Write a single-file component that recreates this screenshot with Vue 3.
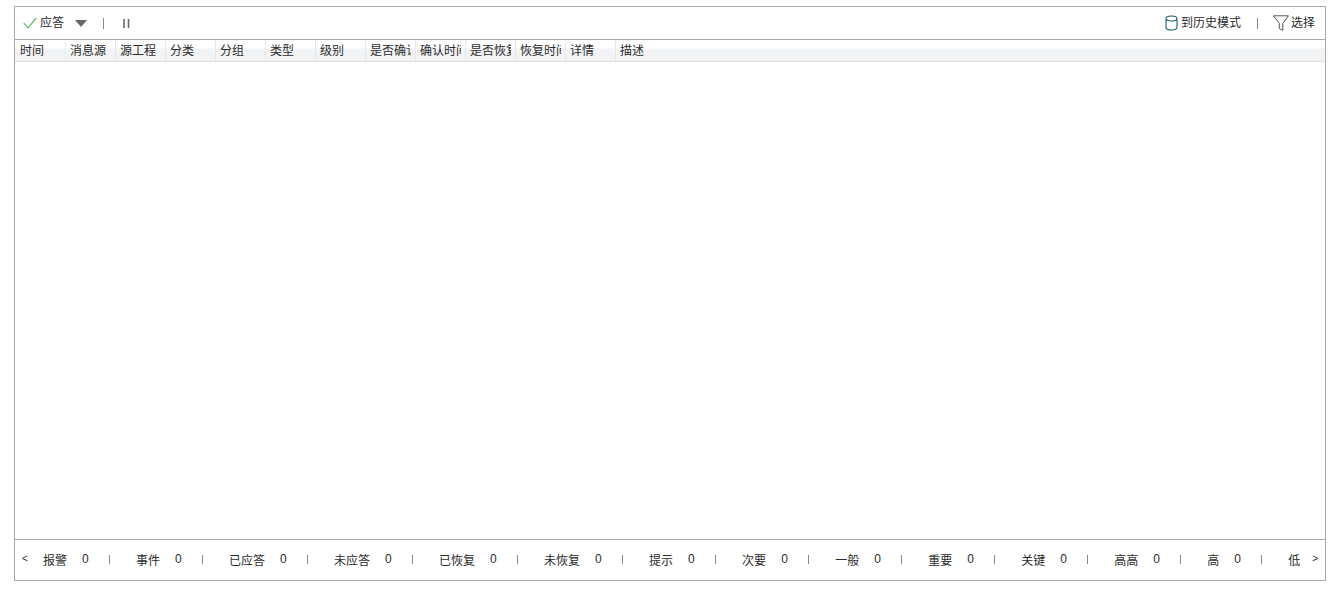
<template>
  <div class="page">
    <div class="panel">
      <div class="toolbar">
        <div class="tool-group">
          <button class="tool-btn">
            <svg class="icon-check" width="14" height="12" viewBox="0 0 14 12">
              <path d="M0.8 6.2L5 10.8L13.4 0.8" fill="none" stroke="#5cb85c" stroke-width="1.2" />
            </svg>
            <span>应答</span>
          </button>
          <svg class="icon-caret" width="12" height="7" viewBox="0 0 12 7">
            <path d="M0 0H12L6 7Z" fill="#666" />
          </svg>
          <i class="tool-sep"></i>
          <svg class="icon-pause" width="7" height="9" viewBox="0 0 7 9">
            <path d="M1 0V9M5.500 0V9" stroke="#666" stroke-width="1.600" fill="none" />
          </svg>
        </div>
        <div class="tool-group">
          <button class="tool-btn">
            <svg class="icon-db" width="13" height="16" viewBox="0 0 13 16">
              <path
                d="M1 3.500C1 1.800 3.400 1 6.500 1S12 1.800 12 3.500V12.500C12 14.200 9.600 15 6.500 15S1 14.200 1 12.500ZM1 3.500C1 5.200 3.400 6 6.500 6S12 5.200 12 3.500"
                fill="none"
                stroke="#1f5f6b"
                stroke-width="1.100"
              />
            </svg>
            <span>到历史模式</span>
          </button>
          <i class="tool-sep sep-right"></i>
          <button class="tool-btn">
            <svg class="icon-filter" width="16" height="16" viewBox="0 0 16 16">
              <path
                d="M0.500 0.800H15.500L9.800 8.300V15.300L6.300 13.600V8.300Z"
                fill="none"
                stroke="#555"
                stroke-width="1"
              />
            </svg>
            <span>选择</span>
          </button>
        </div>
      </div>

      <div class="table-head">
        <div v-for="col in columns" :key="col" class="head-cell">
          <span class="head-text">{{ col }}</span>
        </div>
      </div>

      <div class="table-body"></div>

      <div class="footer">
        <span class="arrow arrow-left">&lt;</span>
        <template v-for="(item, index) in stats" :key="item.label">
          <span class="stat-label">{{ item.label }}</span>
          <template v-if="index < stats.length - 1">
            <span class="stat-count">{{ item.count }}</span>
            <i class="stat-sep"></i>
          </template>
        </template>
        <span class="arrow arrow-right">&gt;</span>
      </div>
    </div>
  </div>
</template>

<script setup>
const columns = [
  '时间',
  '消息源',
  '源工程',
  '分类',
  '分组',
  '类型',
  '级别',
  '是否确认',
  '确认时间',
  '是否恢复',
  '恢复时间',
  '详情',
  '描述'
];

const stats = [
  { label: '报警', count: 0 },
  { label: '事件', count: 0 },
  { label: '已应答', count: 0 },
  { label: '未应答', count: 0 },
  { label: '已恢复', count: 0 },
  { label: '未恢复', count: 0 },
  { label: '提示', count: 0 },
  { label: '次要', count: 0 },
  { label: '一般', count: 0 },
  { label: '重要', count: 0 },
  { label: '关键', count: 0 },
  { label: '高高', count: 0 },
  { label: '高', count: 0 },
  { label: '低', count: 0 }
];
</script>

<style>
html,
body {
  margin: 0;
  background: #fff;
}
</style>

<style scoped>
.page {
  box-sizing: border-box;
  width: 1339px;
  height: 601px;
  padding: 6px 13px 20px 14px;
  font-family: "Liberation Sans", "Noto Sans CJK SC", sans-serif;
  font-size: 12px;
  color: #2b2b2b;
}

.panel {
  box-sizing: border-box;
  height: 575px;
  display: flex;
  flex-direction: column;
  border: 1px solid #aaa;
}

.toolbar {
  flex: none;
  box-sizing: border-box;
  height: 33px;
  display: flex;
  align-items: center;
  justify-content: space-between;
  padding: 0 10px 0 8px;
  border-bottom: 1px solid #aaa;
}

.tool-group {
  display: flex;
  align-items: center;
}

.tool-btn {
  display: flex;
  align-items: center;
  padding: 0;
  border: 0;
  background: none;
  font: inherit;
  color: inherit;
}

.tool-btn span {
  margin-bottom: 4px;
}

.icon-check {
  margin-right: 3px;
}

.icon-caret {
  margin-left: 11px;
}

.tool-sep {
  width: 1px;
  height: 11px;
  margin-left: 16px;
  background: #888;
}

.icon-pause {
  margin-left: 19px;
  margin-top: 1px;
}

.icon-db {
  margin-right: 3px;
}

.sep-right {
  margin: 0 15px 0 16px;
}

.icon-filter {
  margin-right: 2px;
}

.table-head {
  flex: none;
  box-sizing: border-box;
  height: 22px;
  display: flex;
  border-bottom: 1px solid #dcdfe2;
  background: linear-gradient(#fff 0, #fff 35%, #f1f3f5 45%, #f1f3f5 100%);
}

.head-cell {
  box-sizing: border-box;
  width: 50px;
  padding-left: 4px;
  line-height: 22px;
  border-left: 1px solid #e6e8eb;
}

.head-cell:first-child {
  border-left-color: transparent;
}

.head-text {
  display: block;
  width: 41px;
  overflow: hidden;
  white-space: nowrap;
}

.table-body {
  flex: 1;
}

.footer {
  flex: none;
  box-sizing: border-box;
  height: 41px;
  display: flex;
  align-items: center;
  padding: 0 0 2px 7px;
  border-top: 1px solid #aaa;
}

.arrow {
  width: 6px;
  font-size: 10px;
  line-height: 1;
}

.arrow-left {
  margin-right: 15px;
}

.arrow-right {
  margin-left: 12px;
}

.stat-label {
  white-space: nowrap;
}

.stat-count {
  width: 7px;
  margin-left: 15px;
}

.stat-sep {
  width: 1px;
  height: 9px;
  margin: 1px 26px 0 20px;
  background: #888;
}
</style>
